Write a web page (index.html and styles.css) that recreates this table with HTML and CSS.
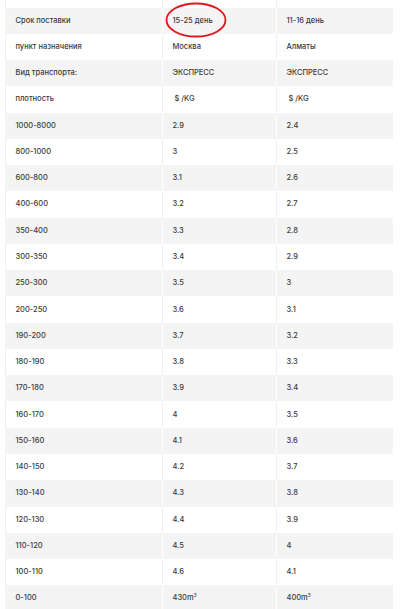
FILE: index.html
```html
<!DOCTYPE html>
<html lang="ru">
<head>
<meta charset="utf-8">
<title>Тарифы</title>
<link rel="stylesheet" href="styles.css">
</head>
<body>
<div class="wrap">
<table class="rates">
<colgroup><col class="c1"><col class="c2"><col class="c3"></colgroup>
<tbody>
<tr class="cut"><td></td><td></td><td></td></tr>
<tr class="g"><td>Срок поставки</td><td class="circled">15-25 день<svg class="ring" viewBox="0 0 62 36" width="62" height="36"><ellipse cx="31" cy="18" rx="29.5" ry="16.5" fill="none" stroke="#e0141b" stroke-width="1.8"/></svg></td><td>11-16 день</td></tr>
<tr><td>пункт назначения</td><td>Москва</td><td>Алматы</td></tr>
<tr class="g"><td>Вид транспорта:</td><td>ЭКСПРЕСС</td><td>ЭКСПРЕСС</td></tr>
<tr><td>плотность</td><td><span class="unit">$ /KG</span></td><td><span class="unit">$ /KG</span></td></tr>
<tr class="g"><td>1000-8000</td><td>2.9</td><td>2.4</td></tr>
<tr><td>800-1000</td><td>3</td><td>2.5</td></tr>
<tr class="g"><td>600-800</td><td>3.1</td><td>2.6</td></tr>
<tr><td>400-600</td><td>3.2</td><td>2.7</td></tr>
<tr class="g"><td>350-400</td><td>3.3</td><td>2.8</td></tr>
<tr><td>300-350</td><td>3.4</td><td>2.9</td></tr>
<tr class="g"><td>250-300</td><td>3.5</td><td>3</td></tr>
<tr><td>200-250</td><td>3.6</td><td>3.1</td></tr>
<tr class="g"><td>190-200</td><td>3.7</td><td>3.2</td></tr>
<tr><td>180-190</td><td>3.8</td><td>3.3</td></tr>
<tr class="g"><td>170-180</td><td>3.9</td><td>3.4</td></tr>
<tr><td>160-170</td><td>4</td><td>3.5</td></tr>
<tr class="g"><td>150-160</td><td>4.1</td><td>3.6</td></tr>
<tr><td>140-150</td><td>4.2</td><td>3.7</td></tr>
<tr class="g"><td>130-140</td><td>4.3</td><td>3.8</td></tr>
<tr><td>120-130</td><td>4.4</td><td>3.9</td></tr>
<tr class="g"><td>110-120</td><td>4.5</td><td>4</td></tr>
<tr><td>100-110</td><td>4.6</td><td>4.1</td></tr>
<tr class="g"><td>0-100</td><td>430m<sup class="cube">3</sup></td><td>400m<sup class="cube">3</sup></td></tr>
</tbody>
</table>
</div>
</body>
</html>
```
FILE: styles.css
```css
html, body {
  margin: 0;
  padding: 0;
  background: #ffffff;
}
body {
  font-family: Inter, "Noto Sans", sans-serif;
  font-size: 7.5px;
  font-weight: 500;
  color: #3a3a3a;
}
.wrap {
  padding-left: 5px;
  width: 388px;
  overflow: hidden;
}
.rates {
  width: 388px;
  border-collapse: collapse;
  table-layout: fixed;
}
.c1 { width: 157px; }
.c2 { width: 114px; }
.c3 { width: 117px; }
.rates tr {
  height: 26.27px;
}
.rates tr.cut {
  height: 7.5px;
}
.rates td {
  padding: 0 0 0 9.5px;
  border-left: 1px solid #efefef;
  border-right: 1px solid #efefef;
  border-top: 0;
  border-bottom: 0;
  vertical-align: middle;
  white-space: nowrap;
  line-height: 10px;
}
.rates tr.g td {
  background: #f4f4f4;
  border-left-color: #ffffff;
  border-right-color: #ffffff;
}
.rates tr.g td:first-child {
  border-left-color: #f4f4f4;
}
.rates tr.g td:last-child {
  border-right-color: #f0f0f0;
}
.unit {
  margin-left: 2px;
}
.cube {
  font-size: 4.5px;
  vertical-align: 3px;
  line-height: 0;
}
.circled {
  position: relative;
}
.ring {
  position: absolute;
  left: 1.5px;
  top: -5.5px;
  overflow: visible;
}
```
